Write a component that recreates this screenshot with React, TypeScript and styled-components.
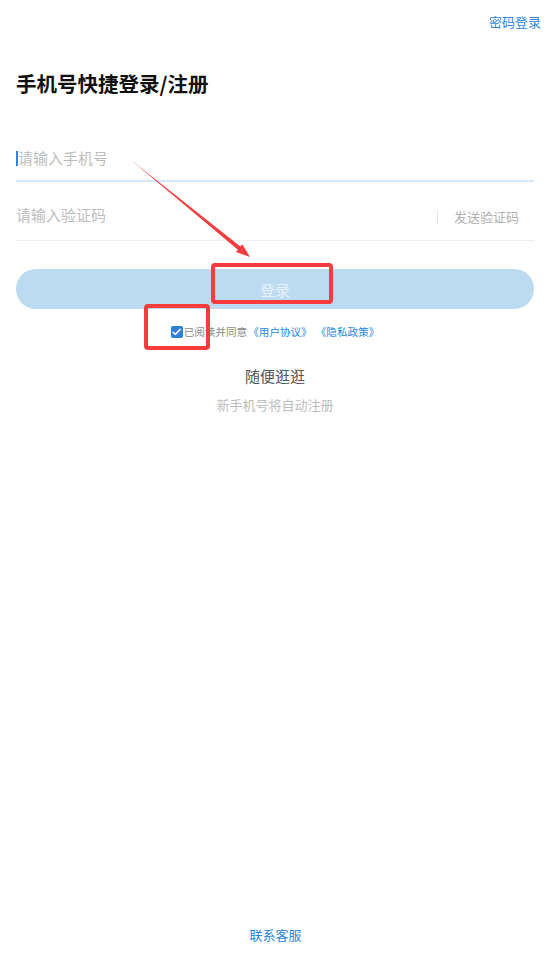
import React from "react";
import styled, { createGlobalStyle } from "styled-components";

const Global = createGlobalStyle`
  html, body { margin: 0; padding: 0; background: #fff; }
  body { font-family: "Noto Sans CJK SC", "Noto Sans", sans-serif; }
  * { box-sizing: border-box; }
`;

const Page = styled.div`
  position: relative;
  width: 551px;
  min-height: 967px;
  display: flex;
  flex-direction: column;
  background: #fff;
`;

const TopBar = styled.div`
  height: 44px;
  display: flex;
  justify-content: flex-end;
  align-items: center;
  padding-right: 10px;
`;

const LinkText = styled.span<{ $size?: number }>`
  font-size: ${(p) => p.$size ?? 13}px;
  color: #2d86db;
  line-height: 18px;
`;

const Content = styled.div`
  padding: 0 17px 0 16px;
  display: flex;
  flex-direction: column;
`;

const Title = styled.h1`
  margin: 27px 0 0;
  font-size: 20.5px;
  line-height: 24px;
  font-weight: 700;
  color: #111;
`;

const Field = styled.div<{ $focused?: boolean }>`
  height: ${(p) => (p.$focused ? 58 : 59)}px;
  display: flex;
  align-items: flex-end;
  padding-bottom: ${(p) => (p.$focused ? 9 : 12)}px;
  border-bottom: ${(p) => (p.$focused ? "2px solid #d6e8f7" : "1px solid #eeeeee")};
`;

const FieldInner = styled.div`
  flex: 1;
  height: 26px;
  display: flex;
  align-items: center;
`;

const Cursor = styled.span`
  width: 2px;
  height: 15px;
  background: #2d86db;
`;

const Placeholder = styled.span`
  flex: 1;
  font-size: 15px;
  color: #bdbdbd;
  line-height: 20px;
`;

const SendCode = styled.span`
  display: flex;
  align-items: center;
  font-size: 13px;
  color: #b0b0b0;
  line-height: 18px;
  padding-top: 4px;
  padding-right: 15px;
`;

const Divider = styled.span`
  width: 1px;
  height: 15px;
  background: #e3e3e3;
  margin-right: 16px;
`;

const LoginButton = styled.button`
  margin-top: 28px;
  height: 40px;
  border: none;
  border-radius: 20px;
  background: #bcdaf0;
  color: #e9f3fb;
  font-family: inherit;
  font-size: 15px;
  padding: 0;
`;

const AgreeRow = styled.div`
  margin-top: 16px;
  display: flex;
  justify-content: center;
  align-items: center;
  height: 14px;
  font-size: 10.6px;
  line-height: 14px;
`;

const Check = styled.span`
  width: 12px;
  height: 12px;
  border-radius: 2px;
  background: #2e80d8;
  display: inline-flex;
  align-items: center;
  justify-content: center;
  margin-right: 1px;
`;

const GrayText = styled.span`
  color: #8a8a8a;
`;

const BlueText = styled.span`
  color: #2d86db;
  margin-left: 1px;
`;

const Browse = styled.div`
  margin-top: 27px;
  text-align: center;
  font-size: 15px;
  line-height: 20px;
  color: #555;
`;

const Hint = styled.div`
  margin-top: 10px;
  text-align: center;
  font-size: 13px;
  line-height: 18px;
  color: #bdbdbd;
`;

const Spacer = styled.div`
  flex: 1;
`;

const Footer = styled.div`
  display: flex;
  justify-content: center;
  padding-bottom: 23px;
`;

const Annotations = styled.svg`
  position: absolute;
  left: 0;
  top: 0;
  pointer-events: none;
`;

const MarkBox = styled.div<{ $x: number; $y: number; $w: number; $h: number }>`
  position: absolute;
  left: ${(p) => p.$x}px;
  top: ${(p) => p.$y}px;
  width: ${(p) => p.$w}px;
  height: ${(p) => p.$h}px;
  border: 4px solid #f63c3c;
  border-radius: 4px;
  pointer-events: none;
`;

export default function App() {
  return (
    <>
      <Global />
      <Page>
        <TopBar>
          <LinkText>密码登录</LinkText>
        </TopBar>
        <Content>
          <Title>手机号快捷登录/注册</Title>
          <Field $focused style={{ marginTop: 29 }}>
            <FieldInner>
              <Cursor />
              <Placeholder>请输入手机号</Placeholder>
            </FieldInner>
          </Field>
          <Field>
            <FieldInner>
              <Placeholder>请输入验证码</Placeholder>
              <SendCode>
                <Divider />
                发送验证码
              </SendCode>
            </FieldInner>
          </Field>
          <LoginButton>登录</LoginButton>
          <AgreeRow>
            <Check>
              <svg width="9" height="8" viewBox="0 0 9 8">
                <path d="M1 4.2 L3.4 6.4 L8 1.4" fill="none" stroke="#fff" strokeWidth="1.5" strokeLinecap="round" strokeLinejoin="round" />
              </svg>
            </Check>
            <GrayText>已阅读并同意</GrayText>
            <BlueText>《用户协议》</BlueText>
            <BlueText style={{ marginLeft: 4 }}>《隐私政策》</BlueText>
          </AgreeRow>
          <Browse>随便逛逛</Browse>
          <Hint>新手机号将自动注册</Hint>
        </Content>
        <Spacer />
        <Footer>
          <LinkText>联系客服</LinkText>
        </Footer>

        <Annotations width="551" height="967" viewBox="0 0 551 967">
          <polygon
            points="131,160 240.4,246.6 242.3,244.3 250,257 236,252 237.9,249.7"
            fill="#f63c3c"
          />
        </Annotations>
        <MarkBox $x={211} $y={263} $w={122} $h={41} />
        <MarkBox $x={144} $y={304} $w={66} $h={46} />
      </Page>
    </>
  );
}
